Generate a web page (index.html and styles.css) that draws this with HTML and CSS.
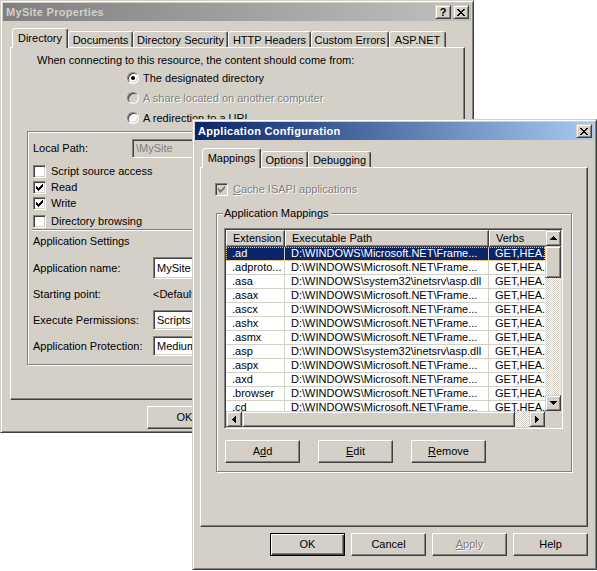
FILE: index.html
```html
<!DOCTYPE html>
<html lang="en">
<head>
<meta charset="utf-8">
<title>MySite Properties</title>
<link rel="stylesheet" href="styles.css">
</head>
<body>
<div class="win back">
  <div class="title inactive">
    <span class="title-text">MySite Properties</span>
    <div class="tbtns">
      <span class="tbtn qmark">?</span>
      <span class="tbtn"><svg class="ico" width="8" height="7" viewBox="0 0 8 7"><path d="M0 0h2v1H0zM6 0h2v1H6zM1 1h2v1H1zM5 1h2v1H5zM2 2h4v1H2zM3 3h2v1H3zM2 4h4v1H2zM1 5h2v1H1zM5 5h2v1H5zM0 6h2v1H0zM6 6h2v1H6z"/></svg></span>
    </div>
  </div>
  <div class="tabs back-tabs">
    <div class="tab sel w-dir">Directory</div>
    <div class="tab w-doc">Documents</div>
    <div class="tab w-sec">Directory Security</div>
    <div class="tab w-http">HTTP Headers</div>
    <div class="tab w-err">Custom Errors</div>
    <div class="tab w-asp">ASP.NET</div>
  </div>
  <div class="panel back-panel">
    <div class="intro">When connecting to this resource, the content should come from:</div>
    <div class="radios">
      <div class="opt"><span class="radio on"></span><span>The designated directory</span></div>
      <div class="opt"><span class="radio off"></span><span class="dis">A share located on another computer</span></div>
      <div class="opt"><span class="radio"></span><span>A redirection to a URL</span></div>
    </div>
    <div class="etched group">
      <div class="path-row"><span class="lbl">Local Path:</span><span class="field disabled path">\MySite</span></div>
      <div class="checks">
        <div class="copt"><span class="chk"></span><span>Script source access</span></div>
        <div class="copt"><span class="chk"><svg class="ico" width="7" height="7" viewBox="0 0 7 7"><path d="M0 2h1v3H0zM1 3h1v3H1zM2 4h1v3H2zM3 3h1v3H3zM4 2h1v3H4zM5 1h1v3H5zM6 0h1v3H6z"/></svg></span><span>Read</span></div>
        <div class="copt"><span class="chk"><svg class="ico" width="7" height="7" viewBox="0 0 7 7"><path d="M0 2h1v3H0zM1 3h1v3H1zM2 4h1v3H2zM3 3h1v3H3zM4 2h1v3H4zM5 1h1v3H5zM6 0h1v3H6z"/></svg></span><span>Write</span></div>
        <div class="copt last"><span class="chk"></span><span>Directory browsing</span></div>
      </div>
      <div class="sep"></div>
      <div class="appset">Application Settings</div>
      <div class="srow"><span class="slbl">Application name:</span><span class="field tall">MySite</span></div>
      <div class="srow"><span class="slbl">Starting point:</span><span>&lt;Default Web Site&gt;/MySite</span></div>
      <div class="srow"><span class="slbl">Execute Permissions:</span><span class="field">Scripts only</span></div>
      <div class="srow"><span class="slbl">Application Protection:</span><span class="field">Medium (Pooled)</span></div>
    </div>
  </div>
  <div class="footer">
    <span class="btn">OK</span><span class="btn">Cancel</span><span class="btn">Apply</span><span class="btn">Help</span>
  </div>
</div>

<div class="win front">
  <div class="title active">
    <span class="title-text">Application Configuration</span>
    <div class="tbtns">
      <span class="tbtn"><svg class="ico" width="8" height="7" viewBox="0 0 8 7"><path d="M0 0h2v1H0zM6 0h2v1H6zM1 1h2v1H1zM5 1h2v1H5zM2 2h4v1H2zM3 3h2v1H3zM2 4h4v1H2zM1 5h2v1H1zM5 5h2v1H5zM0 6h2v1H0zM6 6h2v1H6z"/></svg></span>
    </div>
  </div>
  <div class="tabs front-tabs">
    <div class="tab sel w-map">Mappings</div>
    <div class="tab w-opt">Options</div>
    <div class="tab w-dbg">Debugging</div>
  </div>
  <div class="panel front-panel">
    <div class="cache"><span class="chk dchk"><svg class="ico" width="7" height="7" viewBox="0 0 7 7"><path d="M0 2h1v3H0zM1 3h1v3H1zM2 4h1v3H2zM3 3h1v3H3zM4 2h1v3H4zM5 1h1v3H5zM6 0h1v3H6z"/></svg></span><span class="dis"><u>C</u>ache ISAPI applications</span></div>
    <div class="etched gbox">
      <div class="glabel">Application Mappings</div>
      <div class="listbox">
        <div class="lv">
          <div class="lv-head"><div class="hc c1">Extension</div><div class="hc c2">Executable Path</div><div class="hc c3">Verbs</div></div>
          <div class="lv-row sel"><div class="cell c1">.ad</div><div class="cell c2">D:\WINDOWS\Microsoft.NET\Frame...</div><div class="cell c3">GET,HEA...</div></div>
          <div class="lv-row"><div class="cell c1">.adproto...</div><div class="cell c2">D:\WINDOWS\Microsoft.NET\Frame...</div><div class="cell c3">GET,HEA...</div></div>
          <div class="lv-row"><div class="cell c1">.asa</div><div class="cell c2">D:\WINDOWS\system32\inetsrv\asp.dll</div><div class="cell c3">GET,HEA...</div></div>
          <div class="lv-row"><div class="cell c1">.asax</div><div class="cell c2">D:\WINDOWS\Microsoft.NET\Frame...</div><div class="cell c3">GET,HEA...</div></div>
          <div class="lv-row"><div class="cell c1">.ascx</div><div class="cell c2">D:\WINDOWS\Microsoft.NET\Frame...</div><div class="cell c3">GET,HEA...</div></div>
          <div class="lv-row"><div class="cell c1">.ashx</div><div class="cell c2">D:\WINDOWS\Microsoft.NET\Frame...</div><div class="cell c3">GET,HEA...</div></div>
          <div class="lv-row"><div class="cell c1">.asmx</div><div class="cell c2">D:\WINDOWS\Microsoft.NET\Frame...</div><div class="cell c3">GET,HEA...</div></div>
          <div class="lv-row"><div class="cell c1">.asp</div><div class="cell c2">D:\WINDOWS\system32\inetsrv\asp.dll</div><div class="cell c3">GET,HEA...</div></div>
          <div class="lv-row"><div class="cell c1">.aspx</div><div class="cell c2">D:\WINDOWS\Microsoft.NET\Frame...</div><div class="cell c3">GET,HEA...</div></div>
          <div class="lv-row"><div class="cell c1">.axd</div><div class="cell c2">D:\WINDOWS\Microsoft.NET\Frame...</div><div class="cell c3">GET,HEA...</div></div>
          <div class="lv-row"><div class="cell c1">.browser</div><div class="cell c2">D:\WINDOWS\Microsoft.NET\Frame...</div><div class="cell c3">GET,HEA...</div></div>
          <div class="lv-row"><div class="cell c1">.cd</div><div class="cell c2">D:\WINDOWS\Microsoft.NET\Frame...</div><div class="cell c3">GET,HEA...</div></div>
        </div>
        <div class="vscroll">
          <span class="sbtn"><svg class="ico" width="7" height="4" viewBox="0 0 7 4"><path d="M3 0h1v1H3zM2 1h3v1H2zM1 2h5v1H1zM0 3h7v1H0z"/></svg></span>
          <span class="thumb-v"></span>
          <span class="sbtn down"><svg class="ico" width="7" height="4" viewBox="0 0 7 4"><path d="M0 0h7v1H0zM1 1h5v1H1zM2 2h3v1H2zM3 3h1v1H3z"/></svg></span>
        </div>
        <div class="hscroll">
          <span class="sbtn"><svg class="ico" width="4" height="7" viewBox="0 0 4 7"><path d="M3 0h1v7H3zM2 1h1v5H2zM1 2h1v3H1zM0 3h1v1H0z"/></svg></span>
          <span class="thumb-h"></span>
          <span class="sbtn right"><svg class="ico" width="4" height="7" viewBox="0 0 4 7"><path d="M0 0h1v7H0zM1 1h1v5H1zM2 2h1v3H2zM3 3h1v1H3z"/></svg></span>
        </div>
        <div class="corner"></div>
      </div>
      <div class="lbtns">
        <span class="btn">A<u>d</u>d</span><span class="btn"><u>E</u>dit</span><span class="btn"><u>R</u>emove</span>
      </div>
    </div>
  </div>
  <div class="footer">
    <span class="btn def">OK</span><span class="btn">Cancel</span><span class="btn"><span class="dis"><u>A</u>pply</span></span><span class="btn">Help</span>
  </div>
</div>
</body>
</html>
```

FILE: styles.css
```css
* { box-sizing: border-box; }
html, body { margin: 0; padding: 0; }
body {
  position: relative;
  width: 597px;
  height: 571px;
  overflow: hidden;
  background: #fff;
  color: #000;
  font-family: "Liberation Sans", Arial, sans-serif;
  font-size: 11px;
  line-height: 13px;
}
u { text-decoration: underline; text-underline-offset: 1px; }
.ico { display: block; fill: currentColor; }

.win {
  position: absolute;
  display: flex;
  flex-direction: column;
  background: #d4d0c8;
  border: 1px solid;
  border-color: #d4d0c8 #404040 #404040 #d4d0c8;
  box-shadow: inset 1px 1px #fff, inset -1px -1px #808080;
  padding: 2px;
}
.back { left: 0; top: 0; width: 474px; height: 433px; }
.front { left: 192px; top: 119px; width: 405px; height: 451px; }

.title {
  flex: none;
  height: 18px;
  display: flex;
  align-items: center;
  padding: 0 2px 0 3px;
  font-weight: bold;
  white-space: nowrap;
}
.title-text { letter-spacing: 0.3px; }
.inactive { background: linear-gradient(90deg, #808080, #c0c0c0); color: #d4d0c8; }
.active { background: linear-gradient(90deg, #0a246a, #a6caf0); color: #fff; }
.tbtns { margin-left: auto; display: flex; gap: 2px; }
.tbtn {
  width: 16px;
  height: 14px;
  display: flex;
  align-items: center;
  justify-content: center;
  background: #d4d0c8;
  color: #000;
  border: 1px solid;
  border-color: #d4d0c8 #404040 #404040 #d4d0c8;
  box-shadow: inset 1px 1px #fff, inset -1px -1px #808080;
  font-weight: bold;
  font-size: 11px;
}

.tabs {
  flex: none;
  display: flex;
  align-items: flex-end;
  height: 20px;
  position: relative;
  z-index: 1;
}
.back-tabs { margin: 7px 0 -1px 9px; }
.front-tabs { margin: 8px 0 -1px 7px; }
.tab {
  flex: none;
  height: 16px;
  margin-bottom: 1px;
  padding-top: 1px;
  display: flex;
  align-items: center;
  justify-content: center;
  background: #d4d0c8;
  border: 1px solid;
  border-bottom: 0;
  border-color: #fff #404040 transparent #fff;
  box-shadow: inset -1px 0 #808080;
  border-radius: 3px 3px 0 0;
  white-space: nowrap;
}
.tab.sel { height: 20px; margin-bottom: 0; padding-top: 0; }
.w-dir { width: 56px; }
.w-doc { width: 65px; }
.w-sec { width: 95px; }
.w-http { width: 83px; }
.w-err { width: 78px; }
.w-asp { width: 57px; }
.w-map { width: 59px; }
.w-opt { width: 47px; }
.w-dbg { width: 63px; }

.panel {
  flex: none;
  border: 1px solid;
  border-color: #fff #404040 #404040 #fff;
  box-shadow: inset -1px -1px #808080;
}
.back-panel { margin: 0 6px 0 7px; height: 353px; }
.front-panel { margin: 0 6px 0 5px; height: 360px; }

.dis { color: #808080; text-shadow: 1px 1px 0 #fff; }

/* back window content */
.intro { margin: 6px 0 0 26px; white-space: nowrap; }
.radios { margin: 1px 0 0 116px; }
.opt { height: 20px; display: flex; align-items: center; gap: 4px; white-space: nowrap; }
.radio {
  flex: none;
  position: relative;
  width: 12px;
  height: 12px;
  border-radius: 50%;
  border: 1px solid;
  border-color: #808080 #fff #fff #808080;
  box-shadow: inset 1px 1px #404040, inset -1px -1px #d4d0c8;
  background: #fff;
}
.radio.off { background: #d4d0c8; }
.radio.on::after {
  content: "";
  position: absolute;
  left: 3px;
  top: 3px;
  width: 4px;
  height: 4px;
  border-radius: 50%;
  background: #000;
}

.etched { border: 1px solid #808080; box-shadow: inset 1px 1px #fff, 1px 1px #fff; }
.group { margin: 3px 0 0 16px; width: 428px; height: 234px; padding: 7px 0 0 5px; }
.path-row { height: 19px; display: flex; align-items: center; }
.lbl { flex: none; width: 99px; }
.field {
  flex: none;
  height: 20px;
  display: flex;
  align-items: center;
  padding: 0 3px;
  background: #fff;
  border: 1px solid;
  border-color: #808080 #fff #fff #808080;
  box-shadow: inset 1px 1px #404040, inset -1px -1px #d4d0c8;
  white-space: nowrap;
  overflow: hidden;
}
.field.disabled { background: #d4d0c8; color: #808080; }
.path { width: 313px; height: 19px; }
.checks { margin-top: 5px; }
.copt { height: 16px; display: flex; align-items: center; gap: 5px; white-space: nowrap; }
.copt.last { margin-top: 2px; }
.chk {
  flex: none;
  display: flex;
  width: 13px;
  height: 13px;
  padding: 2px;
  background: #fff;
  border: 1px solid;
  border-color: #808080 #fff #fff #808080;
  box-shadow: inset 1px 1px #404040, inset -1px -1px #d4d0c8;
  color: #000;
}
.chk.dchk { background: #d4d0c8; color: #808080; }
.sep { height: 2px; margin: 0 5px 0 -1px; border-top: 1px solid #808080; border-bottom: 1px solid #fff; }
.appset { height: 20px; display: flex; align-items: center; margin-bottom: 4px; }
.srow { height: 26px; display: flex; align-items: center; white-space: nowrap; }
.slbl { flex: none; width: 120px; }
.srow .field { width: 292px; }
.field.tall { height: 22px; }

.footer { flex: none; display: flex; justify-content: flex-end; gap: 6px; margin: 6px 6px 0 0; }
.btn {
  flex: none;
  width: 75px;
  height: 23px;
  display: flex;
  align-items: center;
  justify-content: center;
  background: #d4d0c8;
  border: 1px solid;
  border-color: #fff #404040 #404040 #fff;
  box-shadow: inset -1px -1px #808080;
  white-space: nowrap;
}
.btn.def {
  border: 1px solid #000;
  box-shadow: inset 1px 1px #fff, inset -1px -1px #404040, inset -2px -2px #808080;
}

/* front window content */
.cache { display: flex; align-items: center; gap: 5px; height: 13px; margin: 15px 0 0 14px; white-space: nowrap; }
.gbox { margin: 17px 0 0 15px; width: 356px; height: 259px; padding: 0 0 0 7px; }
.glabel {
  display: table;
  margin: -7px 0 0 -1px;
  padding: 0 2px 0 1px;
  background: #d4d0c8;
  line-height: 13px;
}
.listbox {
  margin-top: 8px;
  width: 339px;
  height: 201px;
  padding: 1px;
  background: #fff;
  border: 1px solid;
  border-color: #808080 #fff #fff #808080;
  box-shadow: inset 1px 1px #404040, inset -1px -1px #d4d0c8;
  display: grid;
  grid-template-columns: 319px 16px;
  grid-template-rows: 181px 16px;
}
.lv { overflow: hidden; background: #fff; }
.lv-head { display: flex; height: 17px; }
.hc {
  flex: none;
  height: 17px;
  display: flex;
  align-items: center;
  padding-left: 6px;
  background: #d4d0c8;
  border: 1px solid;
  border-color: #fff #404040 #404040 #fff;
  box-shadow: inset -1px -1px #808080;
  white-space: nowrap;
}
.c1 { width: 59px; }
.c2 { width: 204px; }
.c3 { width: 70px; }
.lv-row { display: flex; height: 14px; }
.cell {
  flex: none;
  height: 14px;
  padding-left: 6px;
  border-right: 1px solid #d4d0c8;
  border-bottom: 1px solid #d4d0c8;
  white-space: nowrap;
  overflow: hidden;
  line-height: 13px;
}
.lv-row.sel { background: #0a246a; color: #fff; outline: 1px dotted #e8c980; outline-offset: -1px; }

.vscroll, .hscroll {
  display: flex;
  background: repeating-conic-gradient(#d4d0c8 0 25%, #fff 0 50%) 0 0 / 2px 2px;
}
.vscroll { flex-direction: column; }
.sbtn, .thumb-v, .thumb-h {
  flex: none;
  background: #d4d0c8;
  border: 1px solid;
  border-color: #d4d0c8 #404040 #404040 #d4d0c8;
  box-shadow: inset 1px 1px #fff, inset -1px -1px #808080;
}
.sbtn { width: 16px; height: 16px; display: flex; align-items: center; justify-content: center; }
.thumb-v { width: 16px; height: 32px; }
.thumb-h { width: 273px; height: 16px; }
.sbtn.down { margin-top: auto; }
.sbtn.right { margin-left: auto; }
.corner { background: #d4d0c8; }
.lbtns { display: flex; gap: 18px; margin: 11px 0 0 1px; }
```
